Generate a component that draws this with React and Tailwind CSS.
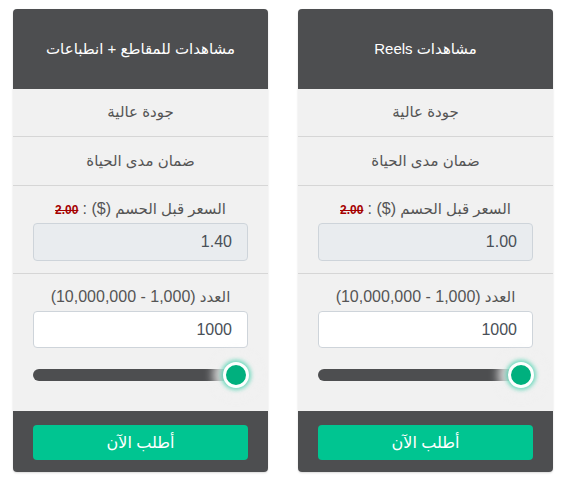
import React from "react";

function Card({ title, price }) {
  return (
    <div className="flex-1 flex flex-col rounded-[4px] overflow-hidden bg-[#f1f1f1] text-[#555] shadow-[0_1px_2px_rgba(0,0,0,0.15)]">
      <div className="h-[80px] bg-[#4d4e50] text-white flex items-center justify-center text-[15px]">
        {title}
      </div>
      <div className="h-[48px] flex items-center justify-center border-b border-[#d6d6d6] text-[15px]">
        جودة عالية
      </div>
      <div className="h-[49px] flex items-center justify-center border-b border-[#d6d6d6] text-[15px]">
        ضمان مدى الحياة
      </div>
      <div className="px-[20px] pt-[12px] pb-[12px] border-b border-[#d6d6d6] flex flex-col">
        <div className="h-[22px] leading-[22px] text-center text-[15px]">
          السعر قبل الحسم <span className="text-[16px]">($) :</span>{" "}
          <span className="line-through text-[#a50000] font-bold text-[12px]">2.00</span>
        </div>
        <div className="mt-[3px] h-[38px] rounded-[4px] border border-[#ced4da] bg-[#e9ecef] flex items-center px-[15px] text-[16px] text-[#495057]">
          {price}
        </div>
      </div>
      <div className="px-[20px] pt-[12px] pb-[30px] flex flex-col">
        <div className="h-[22px] leading-[22px] text-center text-[15px]">
          العدد <span className="text-[16px]">(1,000 - 10,000,000)</span>
        </div>
        <div className="mt-[3px] h-[37px] rounded-[4px] border border-[#ced4da] bg-white flex items-center px-[15px] text-[16px] text-[#495057]">
          1000
        </div>
        <div className="relative mt-[21px] h-[12px] rounded-full bg-[#4d4e50]">
          <div className="absolute right-[-1px] top-1/2 -translate-y-1/2 w-[26px] h-[26px] rounded-full bg-[#00b07e] border-[3px] border-white shadow-[0_0_4px_2px_rgba(0,197,145,0.55),0_0_10px_10px_rgba(241,241,241,0.85)]" />
        </div>
      </div>
      <div className="bg-[#4d4e50] pt-[14px] pb-[12px] px-[20px]">
        <div className="h-[35px] rounded-[4px] bg-[#00c591] text-white flex items-center justify-center text-[16px]">
          أطلب الآن
        </div>
      </div>
    </div>
  );
}

export default function App() {
  return (
    <div
      dir="rtl"
      className="w-[565px] h-[480px] bg-white flex gap-[30px] pr-[12px] pl-[13px] pt-[9px] items-start"
      style={{ fontFamily: '"Liberation Sans", "DejaVu Sans", sans-serif' }}
    >
      <Card title="مشاهدات Reels" price="1.00" />
      <Card title="مشاهدات للمقاطع + انطباعات" price="1.40" />
    </div>
  );
}
